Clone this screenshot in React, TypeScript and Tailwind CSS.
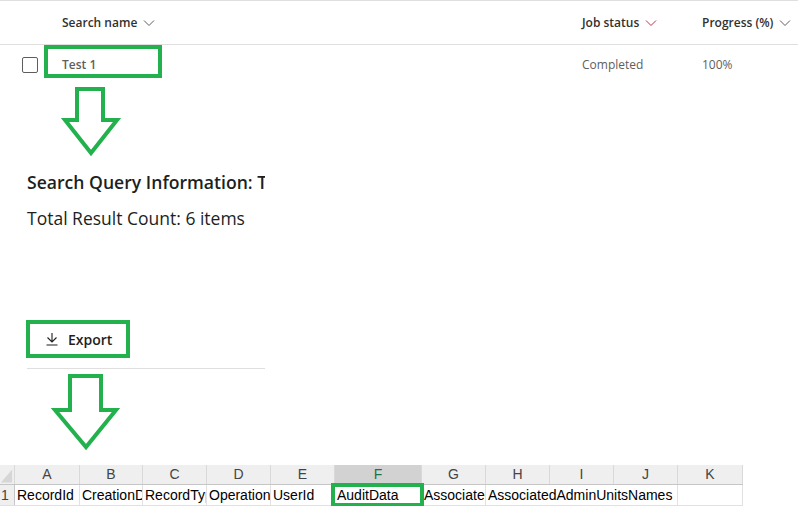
import React from "react";

const GREEN = "#22b14c";

function Chevron({ color = "#605e5c" }: { color?: string }) {
  return (
    <svg width="12" height="8" viewBox="0 0 12 8" className="ml-[6px]">
      <path d="M1 1.5 L6 6.5 L11 1.5" fill="none" stroke={color} strokeWidth="1" />
    </svg>
  );
}

function DownArrow({ points, w, h }: { points: string; w: number; h: number }) {
  return (
    <svg width={w} height={h} viewBox={`0 0 ${w} ${h}`} className="block">
      <polygon points={points} fill="white" stroke={GREEN} strokeWidth="4" strokeLinejoin="miter" />
    </svg>
  );
}

const colWidths = [15, 65, 63, 64, 64, 64, 87, 64, 64, 64, 64, 65];
const letters = ["", "A", "B", "C", "D", "E", "F", "G", "H", "I", "J", "K"];

const rowCells: [string, number][] = [
  ["RecordId", 65],
  ["CreationDate", 63],
  ["RecordType", 64],
  ["Operation", 64],
  ["UserId", 64],
  ["AuditData", 87],
  ["AssociatedAdminUnits", 64],
  ["AssociatedAdminUnitsNames", 192],
  ["", 65],
];

function Sheet() {
  return (
    <div className="w-[743px] font-['Liberation_Sans',Arial,sans-serif] text-[14px] text-black">
      {/* column header row */}
      <div className="flex h-[20px] border-b border-[#c6c6c6]">
        {colWidths.map((w, i) => (
          <div
            key={i}
            style={{ width: w }}
            className={
              "flex items-center justify-center border-r border-[#d9d9d9] shrink-0 " +
              (i === 6 ? "bg-[#d2d2d2] text-[#217346]" : "bg-[#efefef] text-[#444]")
            }
          >
            {i === 0 ? (
              <svg width="15" height="20" viewBox="0 0 15 20">
                <polygon points="13,4 13,18 1,18" fill="#d6d6d6" />
              </svg>
            ) : (
              letters[i]
            )}
          </div>
        ))}
      </div>
      {/* row 1 */}
      <div className="flex h-[21px] border-b border-[#e1e1e1]">
        <div className="w-[15px] shrink-0 bg-[#efefef] border-r border-[#c6c6c6] text-[#444] pl-[1px] leading-[21px]">
          1
        </div>
        {rowCells.map(([t, w], i) => (
          <div
            key={i}
            style={{ width: w }}
            className="relative shrink-0 border-r border-[#e1e1e1] leading-[21px]"
          >
            <div className="overflow-hidden whitespace-nowrap pl-[2px]">{t}</div>
            {i === 5 && (
              <div className="absolute left-[-4px] top-[-2px] w-[93px] h-[24px] border-[4px] border-[#22b14c]" />
            )}
          </div>
        ))}
      </div>
    </div>
  );
}

export default function App() {
  return (
    <div className="w-[798px] h-[506px] bg-white overflow-hidden font-['Open_Sans','Noto_Sans',sans-serif]">
      {/* list header */}
      <div className="flex items-center h-[45px] border-t border-b border-[#e1dfdd] text-[12px] font-semibold text-[#323130]">
        <div className="w-[62px] shrink-0" />
        <div className="flex items-center w-[520px] shrink-0">
          Search name
          <Chevron />
        </div>
        <div className="flex items-center w-[120px] shrink-0">
          Job status
          <Chevron color="#c4314b" />
        </div>
        <div className="flex items-center">
          Progress (%)
          <Chevron />
        </div>
      </div>

      {/* list row */}
      <div className="flex items-center h-[40px] text-[12px] text-[#605e5c]">
        <div className="w-[62px] shrink-0 pl-[22px]">
          <div className="w-[16px] h-[16px] rounded-[2px] border border-[#605e5c]" />
        </div>
        <div className="relative w-[520px] shrink-0 font-semibold">
          Test 1
          <div className="absolute left-[-18px] top-[-11px] w-[118px] h-[33px] border-[4px] border-[#22b14c]" />
        </div>
        <div className="w-[120px] shrink-0">Completed</div>
        <div>100%</div>
      </div>

      {/* arrow to detail panel */}
      <div className="pl-[60px]">
        <DownArrow w={62} h={72} points="17,4 43,4 43,35 57,35 31,68 5,35 17,35" />
      </div>

      {/* detail panel */}
      <div className="ml-[27px] w-[238px] mt-[13px]">
        <div className="overflow-hidden whitespace-nowrap text-[17.6px] font-semibold text-[#201f1e] leading-[24px]">
          Search Query Information: Test 1
        </div>
        <div className="mt-[12px] text-[17.5px] text-[#201f1e] leading-[24px]">
          Total Result Count: 6 items
        </div>

        <div className="mt-[90px] -ml-[1px] w-[104px] h-[38px] border-[4px] border-[#22b14c] flex items-center pl-[15px] text-[14px] font-semibold text-[#201f1e]">
          <svg width="14" height="14" viewBox="0 0 14 14" className="mr-[9px]">
            <path d="M7 1 V10 M2.5 5.5 L7 10 L11.5 5.5 M1.5 13 H12.5" fill="none" stroke="#201f1e" strokeWidth="1.1" />
          </svg>
          Export
        </div>
        <div className="mt-[10px] h-px bg-[#e1dfdd]" />
      </div>

      {/* arrow to spreadsheet */}
      <div className="pl-[50px] mt-[2px]">
        <DownArrow w={72} h={80} points="20,5 51,5 51,39 66,39 36,76 5,39 20,39" />
      </div>

      <div className="mt-[14px]">
        <Sheet />
      </div>
    </div>
  );
}
